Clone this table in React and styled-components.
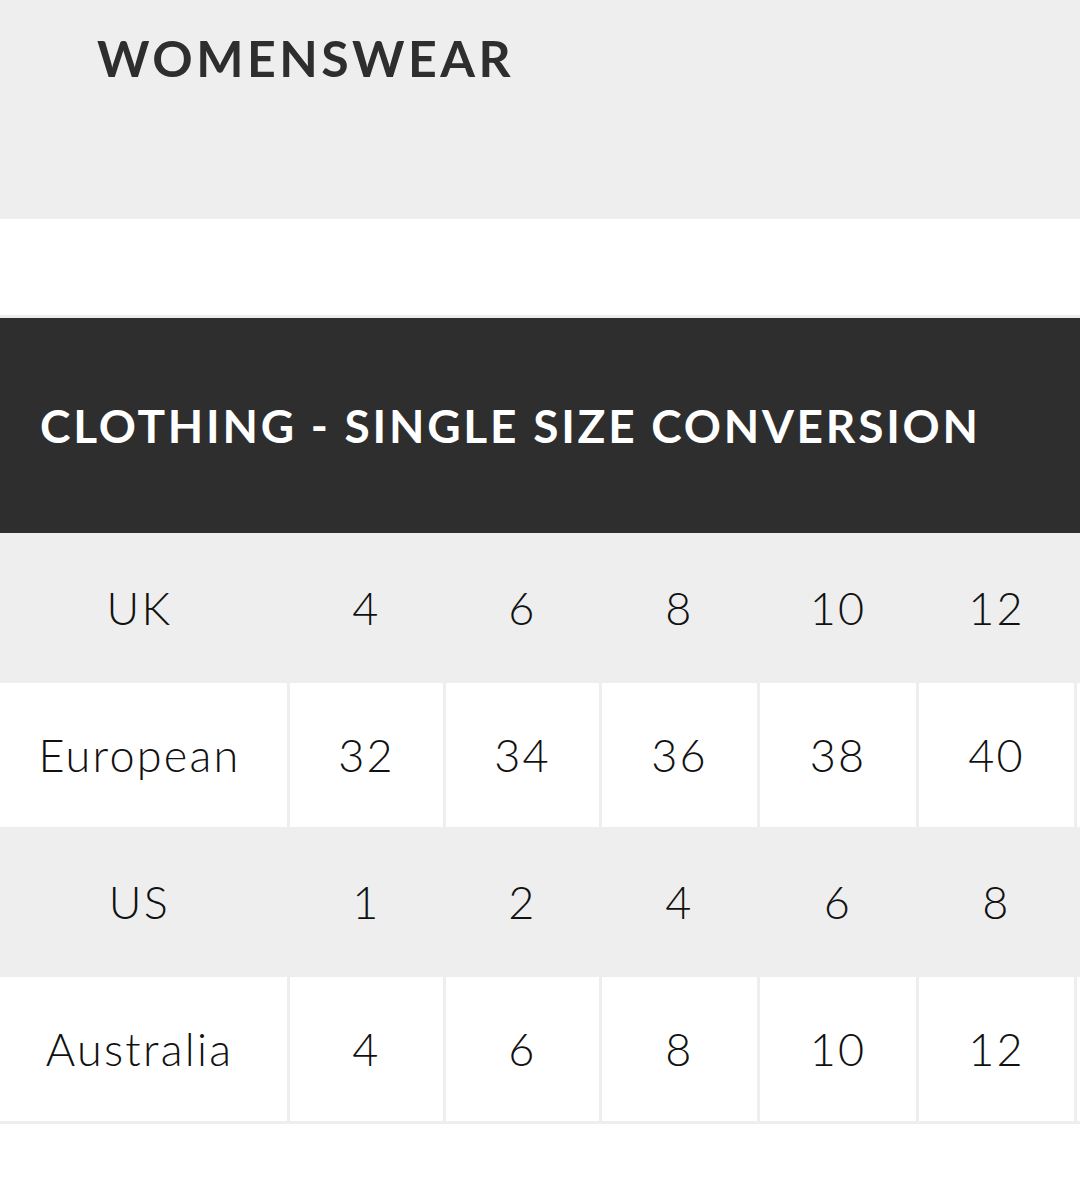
import styled, { createGlobalStyle } from "styled-components";

const GlobalStyle = createGlobalStyle`
	html, body {
		margin: 0;
		padding: 0;
		background: #ffffff;
		font-family: Lato, "Noto Sans", "Liberation Sans", sans-serif;
		overflow-x: hidden;
	}
`;

const rows = [
	{ label: "UK", sizes: ["4", "6", "8", "10", "12"] },
	{ label: "European", sizes: ["32", "34", "36", "38", "40"] },
	{ label: "US", sizes: ["1", "2", "4", "6", "8"] },
	{ label: "Australia", sizes: ["4", "6", "8", "10", "12"] },
];

const App = () => {
	return (
		<Page>
			<GlobalStyle />
			<TopBand>
				<PageTitle>WOMENSWEAR</PageTitle>
			</TopBand>
			<Spacer />
			<SectionHead>
				<SectionTitle>CLOTHING - SINGLE SIZE CONVERSION</SectionTitle>
			</SectionHead>
			<TableWrap>
				<SizeGrid>
					{rows.map((row, i) => {
						const shaded = i % 2 === 0;
						return [
							<Cell key={row.label} $shaded={shaded} $label>
								{row.label}
							</Cell>,
							...row.sizes.map((size, j) => (
								<Cell key={row.label + j} $shaded={shaded}>
									{size}
								</Cell>
							)),
							<Cell key={row.label + "-more"} $shaded={shaded} />,
						];
					})}
				</SizeGrid>
			</TableWrap>
		</Page>
	);
};

const Page = styled.div`
	width: 100%;
	min-height: 1196px;
	background: #ffffff;
	overflow: hidden;
`;

const TopBand = styled.header`
	height: 219px;
	box-sizing: border-box;
	padding: 33px 0 0 97px;
	background: #eeeeee;
`;

const PageTitle = styled.h1`
	margin: 0;
	font-size: 50px;
	line-height: 1;
	font-weight: 700;
	letter-spacing: 0.07em;
	color: #2e2e2e;
`;

const Spacer = styled.div`
	height: 96px;
	border-bottom: 3px solid #eeeeee;
`;

const SectionHead = styled.div`
	height: 215px;
	display: flex;
	align-items: center;
	padding-left: 40px;
	background: #2e2e2e;
`;

const SectionTitle = styled.h2`
	margin: 0;
	font-size: 46px;
	line-height: 1;
	font-weight: 700;
	letter-spacing: 0.06em;
	color: #ffffff;
	white-space: nowrap;
`;

const TableWrap = styled.div`
	width: 100%;
	overflow: hidden;
`;

const SizeGrid = styled.div`
	display: grid;
	grid-template-columns: 287px 153px 153px 155px 156px 155px 155px;
	grid-auto-rows: 144px;
	gap: 3px;
	padding: 3px 0;
	width: max-content;
	background: #eeeeee;
`;

const Cell = styled.div`
	display: flex;
	align-items: center;
	justify-content: center;
	padding-right: ${(p) => (p.$label ? "8px" : "0")};
	background: ${(p) => (p.$shaded ? "#eeeeee" : "#ffffff")};
	font-size: 45px;
	font-weight: 300;
	letter-spacing: 0.05em;
	color: #111111;
`;

export default App;
